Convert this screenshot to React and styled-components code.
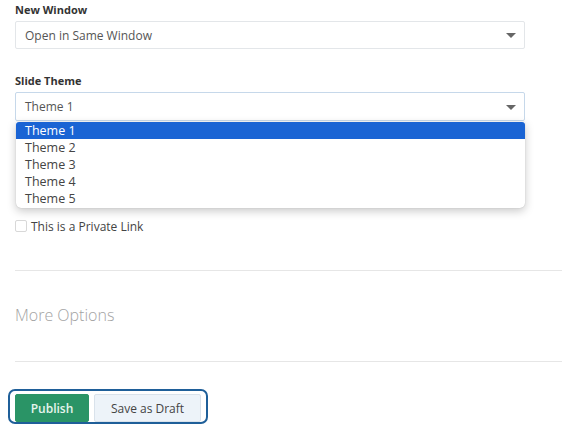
import React from "react";
import styled, { createGlobalStyle } from "styled-components";

const Global = createGlobalStyle`
  html, body { margin: 0; padding: 0; background: #fff; }
  body { font-family: "Open Sans", "Noto Sans", Arial, sans-serif; color: #333; }
  * { box-sizing: border-box; }
`;

const Page = styled.div`
  width: 562px;
  height: 433px;
  overflow: hidden;
  padding: 2px 0 0 15px;
  display: flex;
  flex-direction: column;
`;

const Field = styled.div`
  position: relative;
  width: 510px;
  display: flex;
  flex-direction: column;
  margin-top: ${(p) => p.$mt || 0}px;
`;

const Label = styled.div`
  font-size: 11px;
  font-weight: 700;
  line-height: 16px;
  color: #333;
  margin-bottom: ${(p) => p.$mb || 3}px;
`;

const SelectBox = styled.div`
  height: ${(p) => (p.$focused ? 29 : 28)}px;
  border: 1px solid ${(p) => (p.$focused ? "#c6d8ea" : "#e3e6e9")};
  border-radius: 2px;
  display: flex;
  align-items: center;
  justify-content: space-between;
  padding: 0 8px 0 9px;
  font-size: 12px;
  color: #555;
  background: #fff;
`;

const Caret = styled.span`
  width: 0;
  height: 0;
  border-left: 5px solid transparent;
  border-right: 5px solid transparent;
  border-top: 5px solid #666;
  margin-top: 1px;
`;

const Menu = styled.ul`
  position: absolute;
  top: calc(100% + 1px);
  left: 1px;
  width: 509px;
  margin: 0;
  padding: 0 0 1px;
  list-style: none;
  background: #fff;
  border-radius: 0 0 5px 5px;
  box-shadow: 0 3px 10px rgba(0, 0, 0, 0.22), 0 0 1px rgba(0, 0, 0, 0.25);
  z-index: 2;
`;

const Option = styled.li`
  height: 17px;
  line-height: 17px;
  padding-left: 9px;
  font-size: 12.5px;
  color: ${(p) => (p.$active ? "#fff" : "#444")};
  background: ${(p) => (p.$active ? "#1a64d4" : "transparent")};
  border-radius: ${(p) => (p.$active ? "3px 3px 0 0" : "0")};
`;

const CheckRow = styled.label`
  display: flex;
  align-items: center;
  gap: 4px;
  margin-top: 99px;
  font-size: 12px;
  color: #444;
  height: 12px;
`;

const Box = styled.span`
  width: 12px;
  height: 12px;
  border: 1px solid #d8d8d8;
  border-radius: 2px;
  background: #fff;
`;

const Divider = styled.hr`
  width: 100%;
  margin: ${(p) => p.$mt}px 0 0;
  border: 0;
  border-top: 1px solid #e6e6e6;
  height: 0;
`;

const SectionTitle = styled.div`
  margin-top: 33px;
  height: 22px;
  line-height: 22px;
  font-size: 16px;
  font-weight: 300;
  color: #a3a3a3;
`;

const ButtonGroup = styled.div`
  align-self: flex-start;
  margin: 27px 0 0 -7px;
  display: flex;
  gap: 5px;
  padding: 3px 5px 0 5px;
  height: 35px;
  border: 2px solid #1f5f99;
  border-radius: 7px;
`;

const Button = styled.button`
  height: 28px;
  width: ${(p) => p.$w}px;
  border-radius: 2px;
  font-family: inherit;
  font-size: 12px;
  font-weight: ${(p) => (p.$primary ? 600 : 400)};
  color: ${(p) => (p.$primary ? "#e6f5ed" : "#444")};
  background: ${(p) => (p.$primary ? "#2a9466" : "#edf3f9")};
  border: 1px solid ${(p) => (p.$primary ? "#2a9466" : "#d9e2eb")};
  padding: 0;
  cursor: pointer;
`;

const themes = ["Theme 1", "Theme 2", "Theme 3", "Theme 4", "Theme 5"];

export default function App() {
  return (
    <>
      <Global />
      <Page>
        <Field>
          <Label>New Window</Label>
          <SelectBox>
            <span>Open in Same Window</span>
            <Caret />
          </SelectBox>
        </Field>
        <Field $mt={24}>
          <Label>Slide Theme</Label>
          <SelectBox $focused>
            <span>Theme 1</span>
            <Caret />
          </SelectBox>
          <Menu>
            {themes.map((t, i) => (
              <Option key={t} $active={i === 0}>
                {t}
              </Option>
            ))}
          </Menu>
        </Field>
        <CheckRow>
          <Box />
          This is a Private Link
        </CheckRow>
        <Divider $mt={38} />
        <SectionTitle>More Options</SectionTitle>
        <Divider $mt={35} />
        <ButtonGroup>
          <Button $primary $w={74}>Publish</Button>
          <Button $w={107}>Save as Draft</Button>
        </ButtonGroup>
      </Page>
    </>
  );
}
